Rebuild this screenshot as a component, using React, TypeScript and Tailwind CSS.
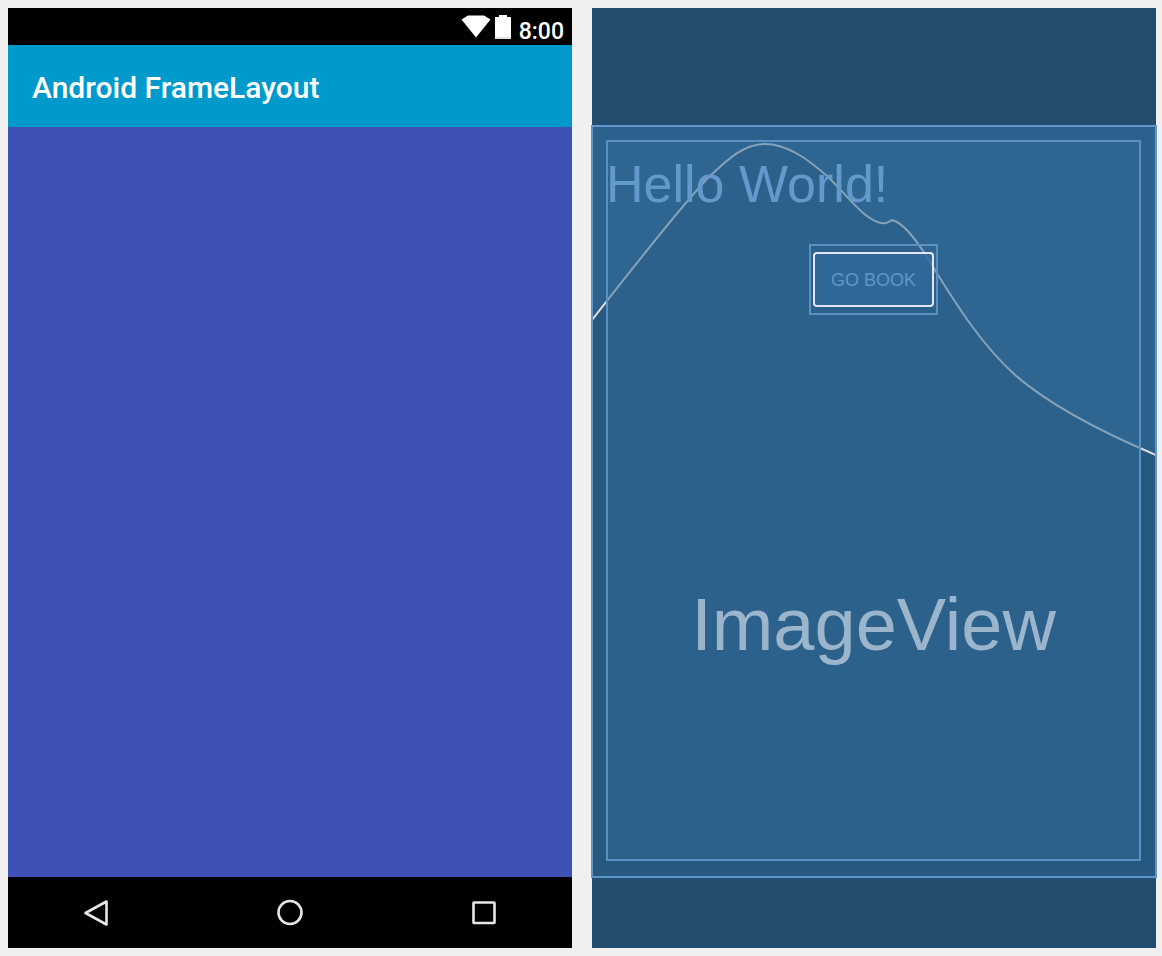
const CURVE =
  "C36 147 92 75 118 49 C136 32 152 17 173 17 C195 17 216 32 236 50 C256 69 271 92 289 96 C299 98 296 91 303 94 C316 100 330 121 346 148 C366 180 390 218 423 248 C452 273 500 301 564 328";

function WifiIcon() {
  return (
    <svg viewBox="0 0 30 24" className="h-6 w-[30px]" aria-hidden="true">
      <path d="M0.5 4.5 L7 0.5 H23 L29.5 4.5 L15 22.5 Z" fill="#fff" />
    </svg>
  );
}

function BatteryIcon() {
  return (
    <svg viewBox="0 0 16 24" className="h-6 w-4" aria-hidden="true">
      <path d="M0 2 H4 V0 H12 V2 H16 V24 H0 Z" fill="#fff" />
      <path d="M0 22 H16 V24 H0 Z" fill="#dce3e3" />
    </svg>
  );
}

const navButtons = [
  { label: "Back", shape: <path d="M3.5 14 L24.5 2.5 V25.5 Z" /> },
  { label: "Home", shape: <circle cx="14" cy="13.5" r="11.5" /> },
  { label: "Recents", shape: <rect x="3.5" y="3.5" width="21" height="20.5" rx="0.5" /> },
];

function DesignPreview() {
  return (
    <section className="flex flex-col bg-[#3e52b5] font-[Roboto,sans-serif] text-white">
      <div className="flex h-[37px] items-center justify-end bg-black pr-2">
        <WifiIcon />
        <span className="ml-1">
          <BatteryIcon />
        </span>
        <span className="ml-2 pt-2.5 text-[23px] leading-8 font-medium">8:00</span>
      </div>
      <header className="flex h-[82px] items-center bg-[#0099cc] px-6">
        <h1 className="pt-1 text-[30px] leading-9 font-medium">Android FrameLayout</h1>
      </header>
      <div className="flex-1" />
      <nav className="flex h-[71px] items-center justify-between bg-black px-[74px]">
        {navButtons.map(({ label, shape }) => (
          <button key={label} type="button" aria-label={label}>
            <svg
              viewBox="0 0 28 28"
              className="size-7"
              fill="none"
              stroke="#e6e6e6"
              strokeWidth="2.6"
              strokeLinejoin="round"
            >
              {shape}
            </svg>
          </button>
        ))}
      </nav>
    </section>
  );
}

function Blueprint() {
  return (
    <section className="flex flex-col bg-[#224d6f] pt-[118px] pb-[71px] font-['Liberation_Sans',Arial,sans-serif]">
      <div className="relative flex flex-1 flex-col bg-[#2b618c] pt-3.5 pr-[15px] pb-4 pl-3.5">
        <svg
          viewBox="0 -1 564 751"
          preserveAspectRatio="none"
          className="absolute inset-0 h-full w-full"
          aria-hidden="true"
        >
          <path d={`M0 193 ${CURVE} V751 H0 Z`} fill="#27587f" />
          <path d={`M0 193 ${CURVE}`} fill="none" stroke="#e0e0e0" strokeWidth="2" />
        </svg>
        <div className="absolute inset-0 outline-2 -outline-offset-1 outline-[#6196c8]" />
        <div className="relative flex flex-1 flex-col items-center bg-[rgba(50,105,150,0.52)] outline-2 -outline-offset-2 outline-[#5b90c3]">
          <p className="self-start pt-3.5 text-[52px] leading-[60px] text-[#6699cb]">
            Hello World!
          </p>
          <div className="mt-[30px] border-2 border-[#5b90c3] px-0.5 py-1.5">
            <button
              type="button"
              className="h-[55px] rounded-sm border-2 border-[#e6e4f4] bg-[#316a9a]/80 px-4 text-[18px] leading-6 text-[#6196c8]"
            >
              GO BOOK
            </button>
          </div>
          <p className="mt-[266px] text-[74px] leading-[88px] text-[#9bb5cc]">ImageView</p>
        </div>
      </div>
    </section>
  );
}

export default function App() {
  return (
    <main className="grid min-h-screen grid-cols-2 gap-5 bg-[#f0f0f0] pt-2 pr-1.5 pb-2 pl-2">
      <DesignPreview />
      <Blueprint />
    </main>
  );
}
